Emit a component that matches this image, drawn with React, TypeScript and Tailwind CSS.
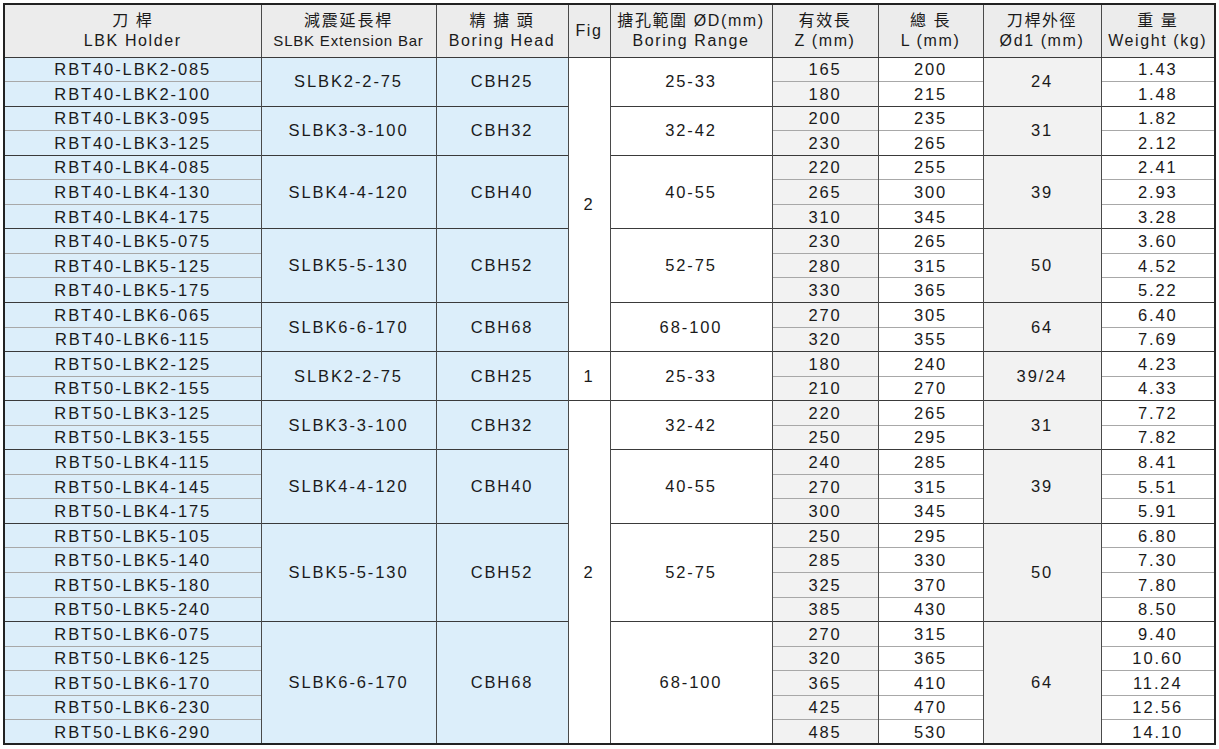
import React from "react";

type Group = {
  holders: string[];
  bar: string;
  head: string;
  fig?: { text: string; span: number };
  range: string;
  z: string[];
  l: string[];
  d1: string;
  w: string[];
};

const groups: Group[] = [
  { holders: ["RBT40-LBK2-085", "RBT40-LBK2-100"], bar: "SLBK2-2-75", head: "CBH25", fig: { text: "2", span: 12 }, range: "25-33", z: ["165", "180"], l: ["200", "215"], d1: "24", w: ["1.43", "1.48"] },
  { holders: ["RBT40-LBK3-095", "RBT40-LBK3-125"], bar: "SLBK3-3-100", head: "CBH32", range: "32-42", z: ["200", "230"], l: ["235", "265"], d1: "31", w: ["1.82", "2.12"] },
  { holders: ["RBT40-LBK4-085", "RBT40-LBK4-130", "RBT40-LBK4-175"], bar: "SLBK4-4-120", head: "CBH40", range: "40-55", z: ["220", "265", "310"], l: ["255", "300", "345"], d1: "39", w: ["2.41", "2.93", "3.28"] },
  { holders: ["RBT40-LBK5-075", "RBT40-LBK5-125", "RBT40-LBK5-175"], bar: "SLBK5-5-130", head: "CBH52", range: "52-75", z: ["230", "280", "330"], l: ["265", "315", "365"], d1: "50", w: ["3.60", "4.52", "5.22"] },
  { holders: ["RBT40-LBK6-065", "RBT40-LBK6-115"], bar: "SLBK6-6-170", head: "CBH68", range: "68-100", z: ["270", "320"], l: ["305", "355"], d1: "64", w: ["6.40", "7.69"] },
  { holders: ["RBT50-LBK2-125", "RBT50-LBK2-155"], bar: "SLBK2-2-75", head: "CBH25", fig: { text: "1", span: 2 }, range: "25-33", z: ["180", "210"], l: ["240", "270"], d1: "39/24", w: ["4.23", "4.33"] },
  { holders: ["RBT50-LBK3-125", "RBT50-LBK3-155"], bar: "SLBK3-3-100", head: "CBH32", fig: { text: "2", span: 14 }, range: "32-42", z: ["220", "250"], l: ["265", "295"], d1: "31", w: ["7.72", "7.82"] },
  { holders: ["RBT50-LBK4-115", "RBT50-LBK4-145", "RBT50-LBK4-175"], bar: "SLBK4-4-120", head: "CBH40", range: "40-55", z: ["240", "270", "300"], l: ["285", "315", "345"], d1: "39", w: ["8.41", "5.51", "5.91"] },
  { holders: ["RBT50-LBK5-105", "RBT50-LBK5-140", "RBT50-LBK5-180", "RBT50-LBK5-240"], bar: "SLBK5-5-130", head: "CBH52", range: "52-75", z: ["250", "285", "325", "385"], l: ["295", "330", "370", "430"], d1: "50", w: ["6.80", "7.30", "7.80", "8.50"] },
  { holders: ["RBT50-LBK6-075", "RBT50-LBK6-125", "RBT50-LBK6-170", "RBT50-LBK6-230", "RBT50-LBK6-290"], bar: "SLBK6-6-170", head: "CBH68", range: "68-100", z: ["270", "320", "365", "425", "485"], l: ["315", "365", "410", "470", "530"], d1: "64", w: ["9.40", "10.60", "11.24", "12.56", "14.10"] },
];

const headers: [string, string][] = [
  ["刀 桿", "LBK Holder"],
  ["減震延長桿", "SLBK Extension Bar"],
  ["精 搪 頭", "Boring Head"],
  ["Fig", ""],
  ["搪孔範圍 ØD(mm)", "Boring Range"],
  ["有效長", "Z (mm)"],
  ["總 長", "L (mm)"],
  ["刀桿外徑", "Ød1 (mm)"],
  ["重 量", "Weight (kg)"],
];

export default function App() {
  const cell = "border-x border-[#4a4a4a] text-center align-middle p-0";
  const top = "border-t border-t-[#3a3a3a]";
  const inner = "border-t border-t-[#a8a8a8]";

  return (
    <div
      className="w-[1219px] h-[749px] bg-white p-[3px] text-[#1a1a1a]"
      style={{ fontFamily: '"Liberation Sans", "Noto Sans CJK TC", sans-serif' }}
    >
      <table className="w-[1211px] table-fixed border-collapse border-2 border-[#222]">
        <colgroup>
          <col className="w-[257px]" />
          <col className="w-[175px]" />
          <col className="w-[132px]" />
          <col className="w-[42px]" />
          <col className="w-[162px]" />
          <col className="w-[106px]" />
          <col className="w-[105px]" />
          <col className="w-[118px]" />
          <col className="w-[114px]" />
        </colgroup>
        <thead>
          <tr className="bg-[#ececec]">
            {headers.map(([zh, en], i) => (
              <th
                key={zh}
                className={`${cell} h-[53px] border-b border-b-[#3a3a3a] font-normal leading-[20px] ${
                  i === 1 ? "text-[15px] tracking-[0.8px]" : "text-[16px] tracking-[1.6px]"
                }`}
              >
                <div className={i === 1 ? "text-[16px] tracking-[1.8px]" : ""}>{zh}</div>
                {en && <div>{en}</div>}
              </th>
            ))}
          </tr>
        </thead>
        <tbody className="text-[16.5px] tracking-[1.9px]">
          {groups.map((g, gi) =>
            g.holders.map((h, i) => {
              const n = g.holders.length;
              const line = i === 0 ? top : inner;
              const row = "h-[24.55px] leading-[20px]";
              return (
                <tr key={`${gi}-${i}`}>
                  <td className={`${cell} ${row} ${line} bg-[#dceefa]`}>{h}</td>
                  {i === 0 && (
                    <>
                      <td rowSpan={n} className={`${cell} ${top} bg-[#dceefa]`}>{g.bar}</td>
                      <td rowSpan={n} className={`${cell} ${top} bg-[#dceefa]`}>{g.head}</td>
                      {g.fig && (
                        <td rowSpan={g.fig.span} className={`${cell} ${top} bg-white`}>{g.fig.text}</td>
                      )}
                      <td rowSpan={n} className={`${cell} ${top} bg-white`}>{g.range}</td>
                    </>
                  )}
                  <td className={`${cell} ${row} ${line} bg-[#f2f2f2]`}>{g.z[i]}</td>
                  <td className={`${cell} ${row} ${line} bg-white`}>{g.l[i]}</td>
                  {i === 0 && (
                    <td rowSpan={n} className={`${cell} ${top} bg-[#f2f2f2]`}>{g.d1}</td>
                  )}
                  <td className={`${cell} ${row} ${line} bg-white`}>{g.w[i]}</td>
                </tr>
              );
            })
          )}
        </tbody>
      </table>
    </div>
  );
}
